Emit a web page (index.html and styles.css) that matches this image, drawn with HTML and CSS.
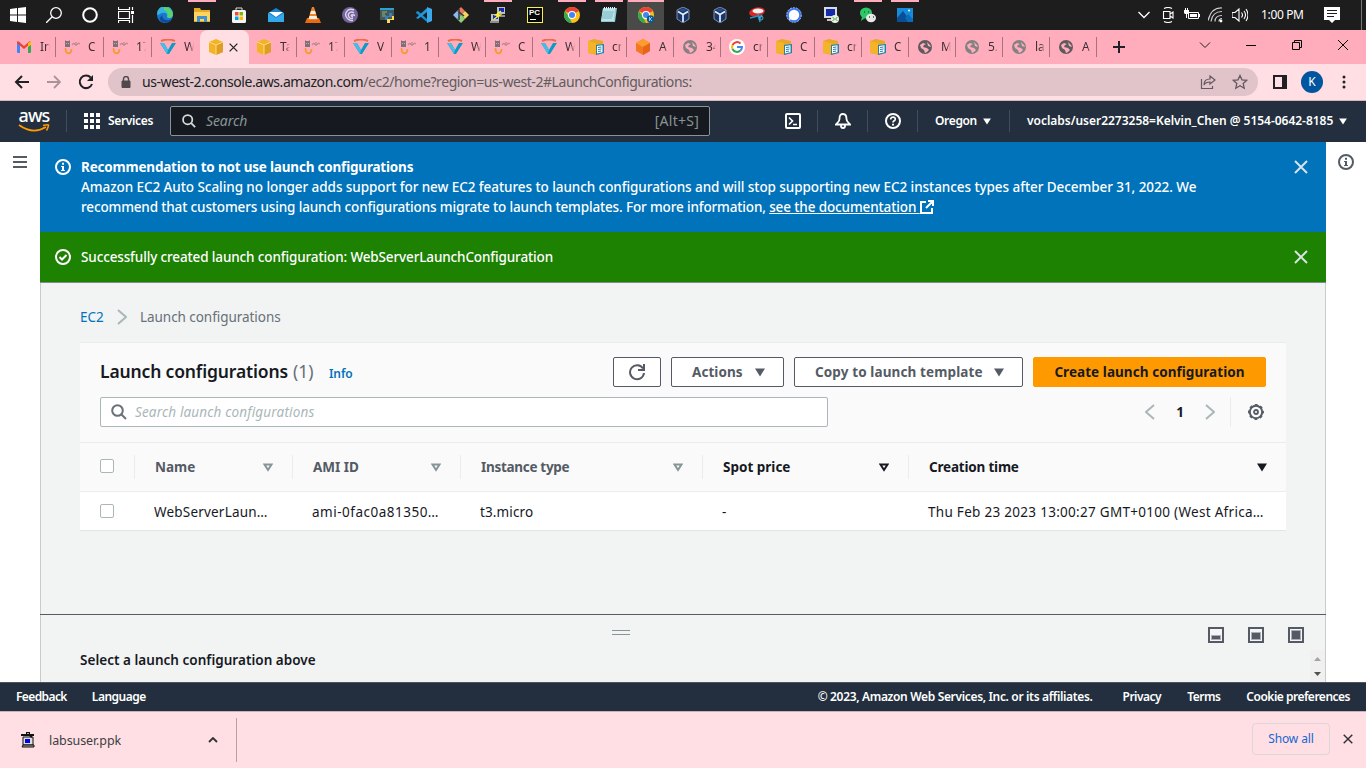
FILE: index.html
```html
<!DOCTYPE html>
<html lang="en">
<head>
<meta charset="utf-8">
<title>Launch configurations | EC2 Management Console</title>
<link rel="stylesheet" href="styles.css">
</head>
<body>
<svg class="sprite" aria-hidden="true">
  <symbol id="lab" viewBox="0 0 16 16"><path d="M1 1l1 1h3l1-1v7H1z" fill="#817079"/><path d="M2 4h1v1H2zm2 0h1v1H4z" fill="#d1a0ab"/><path d="M8 6q2-3 3 0M12 3v4M13 6q1-3 3-1" fill="none" stroke="#c28792" stroke-width="1.300"/><path d="M1.500 9c0 7 6 7 6 1" fill="none" stroke="#f8982f" stroke-width="1.800"/></symbol>
  <symbol id="vee" viewBox="0 0 16 16"><path d="M0 4h4l4 7 4-7h4L9 15H7z" fill="#0a9bc8"/><path d="M4 4l4 7-1 4L0 4z" fill="#47bde4"/><path d="M1 2q7-3 14 0" fill="none" stroke="#f06b43" stroke-width="2"/></symbol>
  <symbol id="cube" viewBox="0 0 16 16"><path d="M1 3l7-3 7 3v10l-7 3-7-3z" fill="#f4b325"/><path d="M8 6l7-3v10l-7 3z" fill="#dc9e25"/><path d="M1 3l7 3 7-3M8 6v10" fill="none" stroke="#ffda82"/></symbol>
  <symbol id="docs" viewBox="0 0 16 16"><path d="M0 2l6-2 9 2v11l-6 3-9-2z" fill="#e6a827"/><path d="M0 2l8 2v11l-8-1z" fill="#f4b32b"/><path d="M8 6l8-1v9l-8 2z" fill="#237fae"/><path d="M9 7l5.500-.7v7L9 14.500z" fill="#fff"/><path d="M10 8.500l3.500-.5M10 10.500l3.500-.5M10 12.500l3-.4" stroke="#237fae"/></symbol>
  <symbol id="orange" viewBox="0 0 16 16"><path d="M1 4l7-4 7 4v8l-7 4-7-4z" fill="#f47820"/><path d="M1 4l7 4 7-4-7-4z" fill="#fb9c2c"/><path d="M8 8l7-4v8l-7 4z" fill="#e6651a"/></symbol>
  <symbol id="globe" viewBox="0 0 16 16"><circle cx="8" cy="8" r="7" fill="currentColor"/><path d="M3 6l3-2 3 1-2 1-1 2 4 1 2 2-2 2-2 1-1-3-3-2M10 3l3 3 1 2-3-1z" fill="#ffadbc"/></symbol>
  <symbol id="google" viewBox="0 0 16 16"><circle cx="8" cy="8" r="8" fill="#fff"/><g fill="none" stroke-width="2"><path d="M11.500 4.500A5 5 0 0 0 3.500 6" stroke="#ea4335"/><path d="M3.500 6a5 5 0 0 0 0 4" stroke="#fbbc05"/><path d="M3.500 10a5 5 0 0 0 8 1.500" stroke="#34a853"/><path d="M11.500 11.500A5 5 0 0 0 13 8H8" stroke="#4285f4"/></g></symbol>
  <symbol id="chrome" viewBox="0 0 16 16"><circle cx="8" cy="8" r="8" fill="#fbc116"/><path d="M8 8L1.100 4a8 8 0 0 1 13.800 0z" fill="#ea4335"/><path d="M1.100 4L5 10l3 6A8 8 0 0 1 1.100 4z" fill="#34a853"/><circle cx="8" cy="8" r="4" fill="#fff"/><circle cx="8" cy="8" r="3" fill="#4285f4"/></symbol>
  <symbol id="vbox" viewBox="0 0 16 16"><path d="M2 3l6-3 6 3v9l-6 4-6-4z" fill="#1a3567" stroke="#8fa9cf" stroke-width=".8"/><path d="M3 4.500l5 3 5-3M8 7.500V15" fill="none" stroke="#e5eef6" stroke-width="1.700"/><path d="M4 3l4-1.500L12 3 8 5z" fill="#264f8d"/></symbol>
  <symbol id="down" viewBox="0 0 10 9"><path d="M0 .5h10L5 8.500z" fill="currentColor"/></symbol>
  <symbol id="sort" viewBox="0 0 10 9"><path d="M1.500 1.500h7L5 7z" fill="none" stroke="currentColor" stroke-width="2"/></symbol>
  <symbol id="search" viewBox="0 0 16 16"><circle cx="6.500" cy="6.500" r="5.300" fill="none" stroke="currentColor" stroke-width="2"/><path d="M10.500 10.500l4.500 4.500" stroke="currentColor" stroke-width="2"/></symbol>
  <symbol id="info" viewBox="0 0 16 16"><circle cx="8" cy="8" r="7" fill="none" stroke="currentColor" stroke-width="2"/><path d="M7 3.800h2v2H7zM6 7h3v4h1v1H6v-1h1V8H6z" fill="currentColor"/></symbol>
  <symbol id="x" viewBox="0 0 14 14"><path d="M1 1l12 12M13 1L1 13" fill="none" stroke="currentColor" stroke-width="2"/></symbol>
  <symbol id="right" viewBox="0 0 10 16"><path d="M1 1l8 7-8 7" fill="none" stroke="currentColor" stroke-width="2"/></symbol>
  <symbol id="left" viewBox="0 0 10 16"><path d="M9 1L1 8l8 7" fill="none" stroke="currentColor" stroke-width="2"/></symbol>
</svg>

<header class="taskbar">
  <div class="slot sys"><svg class="i16" viewBox="0 0 16 16"><path d="M0 2l7-1v6.500H0zM8 .9L16 0v7.500H8zM0 8.500h7V15l-7-1zM8 8.500h8V16l-8-1z" fill="#fff"/></svg></div>
  <div class="slot sys"><svg class="i16" viewBox="0 0 16 16"><circle cx="10" cy="6" r="5.300" fill="none" stroke="#fff" stroke-width="1.300"/><path d="M6.200 9.800L0 16" stroke="#fff" stroke-width="1.300"/></svg></div>
  <div class="slot sys"><svg class="i16" viewBox="0 0 16 16"><circle cx="8" cy="8" r="6.800" fill="none" stroke="#fff" stroke-width="2"/></svg></div>
  <div class="slot sys"><svg class="i16" viewBox="0 0 16 16"><path d="M.5 0v2.500h11V0M.5 16v-2.500h11V16M.5 4.500h11v7H.5zM14.500 0v3m0 5v8" fill="none" stroke="#fff" stroke-width="1.200"/><path d="M13 4h3v3h-3z" fill="#fff"/></svg></div>
  <div class="slot"><svg class="i16" viewBox="0 0 16 16"><circle cx="8" cy="8" r="8" fill="#1678cf"/><path d="M0 7a8 8 0 0 1 16 0c0 5-6 5-6 2.500C11 6 8 5 5 6S1 9 0 7z" fill="#35b3dc"/><path d="M7 .1C12 0 16 4 16 8c-1 3-4 3.500-6 2 2-3 0-6-3-7z" fill="#57d46b"/><path d="M5.500 8c-1 4 4 7 9 4-3 6-11 4-12-1z" fill="#124a99"/></svg></div>
  <div class="slot open"><svg class="i16" viewBox="0 0 16 16"><path d="M0 1h6l1 2h9v12H0z" fill="#e8a924"/><path d="M0 5h16v9H0z" fill="#ffd45e"/><path d="M3 9h10v6h-3v-3H6v3H3z" fill="#3d92d3"/></svg></div>
  <div class="slot"><svg class="i16" viewBox="0 0 16 16"><path d="M5 3V1h6v2" fill="none" stroke="#ddd"/><rect x="1" y="3" width="14" height="13" rx="1.500" fill="#f4f4f4"/><path d="M4 5h3.500v3.500H4z" fill="#f25022"/><path d="M8.500 5H12v3.500H8.500z" fill="#7fba00"/><path d="M4 9.500h3.500V13H4z" fill="#00a4ef"/><path d="M8.500 9.500H12V13H8.500z" fill="#ffb900"/></svg></div>
  <div class="slot"><svg class="i16" viewBox="0 0 16 16"><path d="M0 6l8-5 8 5v9H0z" fill="#1b82d0"/><path d="M1 5h14l-7 5z" fill="#fff"/><path d="M0 6l8 5 8-5v9H0z" fill="#33a9eb"/></svg></div>
  <div class="slot"><svg class="i16" viewBox="0 0 16 16"><path d="M2 11h12l2 5H0z" fill="#e86a12"/><path d="M7 0h2l4 13H3z" fill="#f58122"/><path d="M6 4h4l1 3H5zM4.500 9h7l.8 3H3.700z" fill="#f3eee8"/></svg></div>
  <div class="slot"><svg class="i16" viewBox="0 0 16 16"><circle cx="8" cy="8" r="8" fill="#75629d"/><path d="M12 3C5 0 1 8 6 12q2 2 5 1.500M12 6C8 3 4 8 8 11q1 .7 3 .3M13 8.500c-4-2-5 1-2 1" fill="none" stroke="#ddd7e9" stroke-width="1.400"/></svg></div>
  <div class="slot"><svg class="i16" viewBox="0 0 16 16"><path d="M1 1h14v12H1z" fill="#46575c"/><path d="M1 1h14v2H1z" fill="#29a1d5"/><path d="M3 5h5M3 7h3M3 9h4" stroke="#85b978"/><path d="M10 6h3v4H9v3H6v-4h4z" fill="#3a7dba"/><path d="M15 9v4h-4v3H8v-4h5V9z" fill="#ffd850"/></svg></div>
  <div class="slot"><svg class="i16" viewBox="0 0 16 16"><path d="M0 5l2-1 9 8v3L0 6z" fill="#168ccc"/><path d="M0 11l11-10v4L2 12z" fill="#2396dc"/><path d="M11 0l5 2v12l-5 2z" fill="#39a8ec"/></svg></div>
  <div class="slot"><svg class="i16" viewBox="0 0 16 16"><path d="M8 0l4 4-4 4-4-4z" fill="#ed7760"/><path d="M4 4l4 4-4 4-4-4z" fill="#8db7f2"/><path d="M12 4l4 4-4 4-4-4z" fill="#f4d65e"/><path d="M8 8l4 4-4 4-4-4z" fill="#8bd07d"/><path d="M6 2v11m0-8l5 4" fill="none" stroke="#2e3a35" stroke-width="1.500"/></svg></div>
  <div class="slot open"><svg class="i16" viewBox="0 0 16 16"><path d="M7 0h8v7H7zM1 7h8v7H1z" fill="#bec2ba"/><path d="M9 1h5v4H9zM3 8h5v4H3z" fill="#1627bd"/><path d="M6 8h9v2H6zM0 14h9v2H0z" fill="#8b8f88"/><path d="M11 4L6 8h4l-6 4" fill="none" stroke="#fff52c" stroke-width="1.500"/></svg></div>
  <div class="slot"><span class="pycharm">PC</span></div>
  <div class="slot open"><svg class="i16"><use href="#chrome"/></svg></div>
  <div class="slot open"><svg class="i16" viewBox="0 0 16 16"><path d="M2 1h14l-2 14H0z" fill="#8ec6d2"/><path d="M2 2h12l-1 12H0z" fill="#b8e5e9"/><path d="M2 5h11M2 7h10M1 9h11M1 11h10" stroke="#7eb4bf"/><path d="M3 1h12" stroke="#eee" stroke-width="2" stroke-dasharray="1 1"/></svg></div>
  <div class="slot open current"><svg class="i16" viewBox="0 0 16 16"><use href="#chrome"/><circle cx="12.500" cy="12" r="3.700" fill="#0c5998"/><path d="M11.500 10v4m2.500-4l-2 2 2 2" fill="none" stroke="#b9ddf5" stroke-width=".8"/></svg></div>
  <div class="slot"><svg class="i16"><use href="#vbox"/></svg></div>
  <div class="slot"><svg class="i16"><use href="#vbox"/></svg></div>
  <div class="slot"><svg class="i16" viewBox="0 0 16 16"><ellipse cx="8" cy="5" rx="8" ry="4.500" transform="rotate(-12 8 5)" fill="#d52725"/><ellipse cx="9" cy="4" rx="5.500" ry="2.500" fill="#f7eff0"/><path d="M1 11l8-2M9 7l2 8M13 8l-3 5" stroke="#2c91c4" stroke-width="1.600"/><circle cx="12" cy="11" r="2" fill="none" stroke="#40b3e2"/></svg></div>
  <div class="slot"><svg class="i16" viewBox="0 0 16 16"><circle cx="8" cy="8" r="7.300" fill="#3a76f0" stroke="#9fc1ff" stroke-dasharray="2 1"/><circle cx="8" cy="8" r="5.200" fill="#fff"/><path d="M3 13l1-4 3 3z" fill="#fff"/></svg></div>
  <div class="slot"><svg class="i16" viewBox="0 0 16 16"><path d="M1 0h13v11H1z" fill="#d5dae3"/><path d="M3 2h9v7H3z" fill="#142aaa"/><path d="M4 12h7v2H4z" fill="#c8c8bd"/><circle cx="12" cy="12" r="4" fill="#eceee7"/><path d="M9.500 10l2 2-2 2M14.500 10l-2 2 2 2" fill="none" stroke="#38a936"/></svg></div>
  <div class="slot open"><svg class="i16" viewBox="0 0 16 16"><ellipse cx="6" cy="6" rx="6" ry="5.500" fill="#2bc768"/><path d="M2 10l-1 4 4-3z" fill="#2bc768"/><ellipse cx="11" cy="11" rx="5" ry="4.200" fill="#e8e9e6"/><path d="M4 5h1m3 0h1M9 10h1m3 0h1" stroke="#275d38" stroke-width="1.300"/></svg></div>
  <div class="slot open"><svg class="i16" viewBox="0 0 16 16"><path d="M0 1h16v14H0z" fill="#168cd9"/><path d="M0 15V11l6-7 8 11z" fill="#0a4f96"/><path d="M8 11l3-4 5 5v3h-5z" fill="#0a6bbd"/><path d="M11 3.500h2M12 2.500v2" stroke="#fff"/></svg></div>
  <div class="tray">
    <svg class="t-chev" viewBox="0 0 12 8"><path d="M.5 1L6 6.500 11.500 1" fill="none" stroke="#fff" stroke-width="1.300"/></svg>
    <svg class="i16" viewBox="0 0 16 16"><path d="M4 1.500q4-2 8 0M4 14.500q4 2 8 0M3.500 4.500h6.500v7H3.500zM10 7l3-2v6l-3-2" fill="none" stroke="#fff" stroke-width="1.100"/></svg>
    <svg class="i16" viewBox="0 0 16 16"><path d="M4.500 5.500h10v6h-10z" fill="none" stroke="#fff"/><path d="M6 7h7v3H6zM15 7h1v3h-1zM0 3h5v3l-1 1H1L0 6zM1 1h1v2H1zM3 1h1v2H3zM2 7h1v4H2z" fill="#fff"/></svg>
    <svg class="i16" viewBox="0 0 16 16"><path d="M3 15C4 8 8 5 14 5M7 15c0-4 3-6 7-6M0 14C2 6 7 1 14 1.500M11 15c0-2 1-3 3-3" transform="translate(0 -.5)" fill="none" stroke="#cfcfcf" stroke-width="1.200"/><circle cx="13" cy="14" r="1.400" fill="#fff"/></svg>
    <svg class="i16" viewBox="0 0 16 16"><path d="M0 5.500h3L7 2v12l-4-3.500H0zM9.500 5.500q2 2.500 0 5M12 4q3 4 0 8M14 2q4 6 0 12" fill="none" stroke="#fff" stroke-width="1.100"/></svg>
    <span class="clock">1:00 PM</span>
    <svg class="i16 bell" viewBox="0 0 16 16"><path d="M0 0h16v13h-5l-3 3-3-3H0z" fill="#fff"/><path d="M3 3.500h10M3 6.500h10M3 9.500h7" stroke="#1d1d1d"/></svg>
  </div>
</header>

<nav class="tabs">
  <div class="tab early"><svg class="i16" viewBox="0 0 16 16"><path d="M1 3h3v11H2q-1 0-1-1z" fill="#4285f4"/><path d="M12 3h3v10q0 1-1 1h-2z" fill="#34a853"/><path d="M1 3l1-1 6 5 6-5 1 2-7 6-7-6z" fill="#ea4335"/><path d="M12 4l3-2v4l-3 2z" fill="#fbbc04"/></svg><span>In</span></div>
  <div class="tab early"><svg class="i16"><use href="#lab"/></svg><span>C</span></div>
  <div class="tab early"><svg class="i16"><use href="#lab"/></svg><span>17</span></div>
  <div class="tab early last"><svg class="i16"><use href="#vee"/></svg><span>W</span></div>
  <div class="tab active"><svg class="i16"><use href="#cube"/></svg><svg class="tabx"><use href="#x"/></svg></div>
  <div class="tab wide"><svg class="i16"><use href="#cube"/></svg><span>Ta</span></div>
  <div class="tab wide"><svg class="i16"><use href="#lab"/></svg><span>17</span></div>
  <div class="tab"><svg class="i16"><use href="#vee"/></svg><span>V</span></div>
  <div class="tab"><svg class="i16"><use href="#lab"/></svg><span>1</span></div>
  <div class="tab"><svg class="i16"><use href="#vee"/></svg><span>W</span></div>
  <div class="tab"><svg class="i16"><use href="#lab"/></svg><span>C</span></div>
  <div class="tab"><svg class="i16"><use href="#vee"/></svg><span>W</span></div>
  <div class="tab"><svg class="i16"><use href="#docs"/></svg><span>cr</span></div>
  <div class="tab"><svg class="i16"><use href="#orange"/></svg><span>A</span></div>
  <div class="tab"><svg class="i16 faded"><use href="#globe"/></svg><span>34</span></div>
  <div class="tab"><svg class="i16"><use href="#google"/></svg><span>cr</span></div>
  <div class="tab"><svg class="i16"><use href="#docs"/></svg><span>C</span></div>
  <div class="tab"><svg class="i16"><use href="#docs"/></svg><span>cr</span></div>
  <div class="tab"><svg class="i16"><use href="#docs"/></svg><span>C</span></div>
  <div class="tab"><svg class="i16 world"><use href="#globe"/></svg><span>M</span></div>
  <div class="tab"><svg class="i16 faded"><use href="#globe"/></svg><span>5.</span></div>
  <div class="tab"><svg class="i16 faded"><use href="#globe"/></svg><span>la</span></div>
  <div class="tab"><svg class="i16 world"><use href="#globe"/></svg><span>A</span></div>
  <svg class="newtab" viewBox="0 0 12 12"><path d="M6 0v12M0 6h12" stroke="#202124" stroke-width="2"/></svg>
  <div class="winctl">
    <svg class="wc" viewBox="0 0 12 12"><path d="M1 3.500l5 5 5-5" fill="none" stroke="#222"/></svg>
    <svg class="wc" viewBox="0 0 12 12"><path d="M1 6.500h10" stroke="#000"/></svg>
    <svg class="wc" viewBox="0 0 12 12"><path d="M1.500 3.500h7v7h-7zM3.500 3V1.500h7v7H9" fill="none" stroke="#000"/></svg>
    <svg class="wc" viewBox="0 0 12 12"><path d="M1 1l10 10M11 1L1 11" stroke="#000"/></svg>
  </div>
</nav>

<div class="toolbar">
  <svg class="i16 back" viewBox="0 0 16 16"><path d="M15 8H2m6-6L2 8l6 6" fill="none" stroke="#202124" stroke-width="2"/></svg>
  <svg class="i16 fwd" viewBox="0 0 16 16"><path d="M1 8h13M8 2l6 6-6 6" fill="none" stroke="#ab9499" stroke-width="1.800"/></svg>
  <svg class="i16 reload" viewBox="0 0 16 16"><path d="M14 10A6.300 6.300 0 1 1 12.700 3.500" fill="none" stroke="#202124" stroke-width="2"/><path d="M15 1v6H9z" fill="#202124"/></svg>
  <div class="omnibox">
    <svg class="lock" viewBox="0 0 10 12"><path d="M1 5h8v6.500H1z" fill="#50484b" stroke="#50484b"/><path d="M2.500 5V3a2.500 2.500 0 0 1 5 0v2" fill="none" stroke="#50484b" stroke-width="1.400"/></svg>
    <span class="url"><b>us-west-2.console.aws.amazon.com</b>/ec2/home?region=us-west-2#LaunchConfigurations:</span>
    <svg class="i16 share" viewBox="0 0 16 16"><path d="M1.500 5v9.500h11V12M4 11c0-4 2-6 6-6V2l5 4-5 4V8c-3 0-5 1-6 3z" fill="none" stroke="#65595d" stroke-width="1.200"/></svg>
    <svg class="i16 star" viewBox="0 0 16 16"><path d="M8 1.500l2 4.300 4.700.5-3.500 3.200 1 4.700L8 11.800l-4.200 2.400 1-4.700L1.300 6.300 6 5.800z" fill="none" stroke="#65595d" stroke-width="1.300"/></svg>
  </div>
  <svg class="panelico" viewBox="0 0 14 14"><path d="M1 1h12v12H1z" fill="none" stroke="#202124" stroke-width="2"/><path d="M9 1h4v12H9z" fill="#202124"/></svg>
  <span class="avatar">K</span>
  <svg class="dots" viewBox="0 0 4 16"><circle cx="2" cy="3" r="1.500"/><circle cx="2" cy="8" r="1.500"/><circle cx="2" cy="13" r="1.500"/></svg>
</div>

<div class="awsbar">
  <div class="logo"><span>aws</span><svg viewBox="0 0 32 8"><path d="M1 1q14 10 27 2" fill="none" stroke="#ff9900" stroke-width="1.800"/><path d="M25 1.500q6-1.500 5.500 0Q30 4 28.500 6.500" fill="none" stroke="#ff9900" stroke-width="1.500"/></svg></div>
  <i class="vr"></i>
  <svg class="i16 grid" viewBox="0 0 16 16"><path d="M0 0h4v4H0zm6 0h4v4H6zm6 0h4v4h-4zM0 6h4v4H0zm6 0h4v4H6zm6 0h4v4h-4zM0 12h4v4H0zm6 0h4v4H6zm6 0h4v4h-4z" fill="#fff"/></svg>
  <span class="services">Services</span>
  <div class="globalsearch"><svg class="i16"><use href="#search"/></svg><em>Search</em><span>[Alt+S]</span></div>
  <svg class="i16 shell" viewBox="0 0 16 16"><rect x="1" y="1" width="14" height="14" rx="1" fill="none" stroke="#fff" stroke-width="2"/><path d="M4 4.500L7.500 8 4 11.500M8 11.500h4" fill="none" stroke="#fff" stroke-width="1.700"/></svg>
  <i class="vr"></i>
  <svg class="i16 notif" viewBox="0 0 16 16"><path d="M8 1C5 1 4.500 3 4.500 6c0 3-2.500 4-3.500 5.500h14C14 10 11.500 9 11.500 6c0-3-.5-5-3.500-5zM6 12v1q0 2 2 2t2-2v-1" fill="none" stroke="#fff" stroke-width="1.800"/></svg>
  <i class="vr"></i>
  <svg class="i16 help" viewBox="0 0 16 16"><circle cx="8" cy="8" r="7" fill="none" stroke="#fff" stroke-width="2"/><path d="M5.700 6.500C5.700 3 10.500 3.500 10.300 6.300 10.200 8 8 7.500 8 9.500" fill="none" stroke="#fff" stroke-width="1.700"/><path d="M7 10.700h2v1.800H7z" fill="#fff"/></svg>
  <i class="vr"></i>
  <span class="region">Oregon</span><svg class="caret"><use href="#down"/></svg>
  <i class="vr"></i>
  <span class="account">voclabs/user2273258=Kelvin_Chen @ 5154-0642-8185</span><svg class="caret"><use href="#down"/></svg>
</div>

<div class="page">
  <aside class="rail"><svg viewBox="0 0 14 12"><path d="M0 1h14M0 6h14M0 11h14" stroke="#545b64" stroke-width="2"/></svg></aside>
  <main class="content">
    <section class="flash blue">
      <svg class="i16"><use href="#info"/></svg>
      <div class="flashtext"><strong>Recommendation to not use launch configurations</strong><p class="l1">Amazon EC2 Auto Scaling no longer adds support for new EC2 features to launch configurations and will stop supporting new EC2 instances types after December 31, 2022. We</p><p class="l2">recommend that customers using launch configurations migrate to launch templates. For more information, <a>see the documentation <svg class="ext" viewBox="0 0 14 14"><path d="M6 2H1v11h11V8M8 1h5v5M13 1L6 8" fill="none" stroke="#fff" stroke-width="2"/></svg></a></p></div>
      <svg class="close"><use href="#x"/></svg>
    </section>
    <section class="flash green">
      <svg class="i16" viewBox="0 0 16 16"><circle cx="8" cy="8" r="7" fill="none" stroke="#fff" stroke-width="2"/><path d="M4.500 8l2.500 2.500L11.500 6" fill="none" stroke="#fff" stroke-width="2"/></svg>
      <div class="flashtext success">Successfully created launch configuration: WebServerLaunchConfiguration</div>
      <svg class="close"><use href="#x"/></svg>
    </section>
    <div class="crumbs"><a>EC2</a><svg><use href="#right"/></svg><span>Launch configurations</span></div>
    <section class="card">
      <div class="cardhead">
        <div class="titlebar">
          <h1>Launch configurations</h1><span class="count">(1)</span><a class="infolink">Info</a>
          <div class="buttons">
            <span class="btn refresh"><svg viewBox="0 0 18 18"><path d="M16 10A7 7 0 1 1 15 5.500" fill="none" stroke="#545b64" stroke-width="2"/><path d="M16 1v6h-6" fill="none" stroke="#545b64" stroke-width="2"/></svg></span>
            <span class="btn actions"><span>Actions</span><svg class="bcaret"><use href="#down"/></svg></span>
            <span class="btn copy"><span>Copy to launch template</span><svg class="bcaret"><use href="#down"/></svg></span>
            <span class="btn create"><span>Create launch configuration</span></span>
          </div>
        </div>
        <div class="filterbar">
          <div class="filter"><svg class="i16"><use href="#search"/></svg><em>Search launch configurations</em></div>
          <div class="pager"><svg class="pg"><use href="#left"/></svg><b>1</b><svg class="pg"><use href="#right"/></svg></div>
          <div class="gear"><svg class="i16" viewBox="0 0 16 16"><circle cx="8" cy="8" r="6.200" fill="none" stroke="#545b64" stroke-width="2"/><circle cx="8" cy="8" r="7.300" fill="none" stroke="#545b64" stroke-width="1.300" stroke-dasharray="3 2.733" stroke-dashoffset="1.500"/><circle cx="8" cy="8" r="2" fill="none" stroke="#545b64" stroke-width="1.800"/></svg></div>
        </div>
      </div>
      <div class="row thead">
        <div class="cell check"><i class="box"></i></div>
        <div class="cell"><span>Name</span><svg class="sort"><use href="#sort"/></svg></div>
        <div class="cell"><span>AMI ID</span><svg class="sort"><use href="#sort"/></svg></div>
        <div class="cell"><span class="h-type">Instance type</span><svg class="sort"><use href="#sort"/></svg></div>
        <div class="cell dark"><span>Spot price</span><svg class="sort"><use href="#sort"/></svg></div>
        <div class="cell dark"><span class="h-time">Creation time</span><svg class="sort"><use href="#down"/></svg></div>
      </div>
      <div class="row tbody">
        <div class="cell check"><i class="box"></i></div>
        <div class="cell"><span class="v-name">WebServerLaun…</span></div>
        <div class="cell"><span class="v-ami">ami-0fac0a81350…</span></div>
        <div class="cell"><span class="v-type">t3.micro</span></div>
        <div class="cell"><span>-</span></div>
        <div class="cell"><span class="v-time">Thu Feb 23 2023 13:00:27 GMT+0100 (West Africa…</span></div>
      </div>
    </section>
    <section class="split">
      <div class="splitbar"><i class="handle"></i><div class="sizes">
        <svg class="i16" viewBox="0 0 16 16"><path d="M1 1h14v14H1z" fill="#f5f5f5" stroke="#545b64" stroke-width="2"/><path d="M3.500 8.500h9v4h-9z" fill="#545b64" stroke="#aaadb1"/></svg>
        <svg class="i16" viewBox="0 0 16 16"><path d="M1 1h14v14H1z" fill="#f5f5f5" stroke="#545b64" stroke-width="2"/><path d="M3.500 5.500h9v7h-9z" fill="#545b64" stroke="#aaadb1"/></svg>
        <svg class="i16" viewBox="0 0 16 16"><path d="M1 1h14v14H1z" fill="#f5f5f5" stroke="#545b64" stroke-width="2"/><path d="M3.500 3.500h9v9h-9z" fill="#545b64" stroke="#aaadb1"/></svg></div></div>
      <div class="splitbody"><h2>Select a launch configuration above</h2><div class="scroll"><svg viewBox="0 0 7 4"><path d="M0 4h7L3.500 0z" fill="#a3a3a3"/></svg><svg viewBox="0 0 7 4"><path d="M0 0h7L3.500 4z" fill="#505050"/></svg></div></div>
    </section>
  </main>
  <aside class="rail right"><svg class="i16"><use href="#info"/></svg></aside>
</div>

<footer class="foot"><span class="f1">Feedback</span><span class="f2">Language</span><span class="f3">© 2023, Amazon Web Services, Inc. or its affiliates.</span><span class="f4">Privacy</span><span class="f5">Terms</span><span class="f6">Cookie preferences</span></footer>
<div class="downloads">
  <div class="download"><svg class="i16" viewBox="0 0 16 16"><path d="M3 5h10v8H3z" fill="#ddd" stroke="#111"/><path d="M5 7h5v4H5z" fill="#0000f0"/><path d="M6 0h4v2h4v2h-2v2L9 4H1V2h5z" fill="#111"/><path d="M7 1h2v1H7z" fill="#9b9"/><path d="M3 13h11v2H2z" fill="#a7a58d" stroke="#111"/></svg><span>labsuser.ppk</span><svg class="up" viewBox="0 0 10 6"><path d="M1 5l4-4 4 4" fill="none" stroke="#303134" stroke-width="1.800"/></svg></div>
  <span class="showall">Show all</span><svg class="dlx"><use href="#x"/></svg>
</div>
</body>
</html>
```
FILE: styles.css
```css
* { box-sizing: border-box; }
body { margin: 0; width: 1366px; height: 768px; overflow: hidden; display: flex; flex-direction: column; background: #fff; color: #16191f; font: 13.5px/20px "Noto Sans", "Open Sans", sans-serif; }
svg { display: block; flex: none; }
.sprite { position: absolute; width: 0; height: 0; }
.i16 { width: 16px; height: 16px; }
h1, h2, p { margin: 0; }
span, em, h1, h2, strong { white-space: nowrap; }

/* Windows taskbar */
.taskbar { height: 30px; flex: none; display: flex; background: #1d1d1d; }
.slot { width: 37px; height: 30px; flex: none; display: flex; align-items: center; justify-content: center; }
.slot.sys { width: 36px; }
.slot.sys:nth-child(4) { width: 38px; padding-right: 2px; }
.open { background: linear-gradient(#ffadbc, #ffadbc) center top / 28px 2px no-repeat; }
.current { background: linear-gradient(#ffadbc, #ffadbc) center top / 36px 2px no-repeat, #4a4a49; }
.pycharm { width: 16px; height: 16px; border: 1px solid #f6f150; background: #080808 linear-gradient(#fff, #fff) 2px 11px / 6px 1px no-repeat; color: #fff; font: bold 8px/9px "Liberation Sans", sans-serif; text-align: center; }
.tray { margin-left: auto; width: 228px; height: 30px; display: flex; align-items: center; color: #fff; border-right: 1px solid #777; margin-right: 4px; }
.t-chev { width: 12px; height: 8px; margin: 0 10px 0 4px; }
.tray .i16 { margin-right: 8px; }
.clock { font-size: 12px; letter-spacing: -.35px; margin-left: 5px; width: 41px; }
.tray .bell { margin: 0 0 0 22px; }

/* Browser tabs */
.tabs { height: 34px; flex: none; display: flex; align-items: center; padding-left: 8px; background: #ffadbc; color: #3c3035; }
.tab { width: 47px; height: 20px; flex: none; display: flex; align-items: center; padding-left: 8px; border-right: 1px solid #a5727e; font-size: 12px; }
.tab.wide { width: 48px; padding-left: 7px; }
.tab.early { width: 48px; }
.tab.last { border-color: transparent; }
.tab span { width: 10px; height: 18px; line-height: 18px; margin-left: 8px; -webkit-mask-image: linear-gradient(90deg, #000 55%, transparent); mask-image: linear-gradient(90deg, #000 55%, transparent); }
.tab.active { width: 49px; height: 34px; padding-left: 8px; border: 0; border-radius: 8px 8px 0 0; background: #ffdfe4; }
.tabx { width: 9px; height: 9px; margin-left: 5px; color: #202124; }
.faded { color: #858082; }
.world { color: #5f5a5d; }
.newtab { width: 12px; height: 12px; margin-left: 16px; }
.winctl { margin-left: auto; display: flex; gap: 34px; padding: 0 17px 5px 0; }
.wc { width: 12px; height: 12px; }

/* Address bar */
.toolbar { height: 37px; flex: none; display: flex; align-items: center; background: #ffdfe4; border-bottom: 1px solid #d0babf; }
.back { margin-left: 14px; }
.fwd { margin-left: 16px; }
.reload { margin-left: 16px; }
.omnibox { width: 1150px; height: 28px; margin-left: 14px; border-radius: 14px; background: #e0c4c9; display: flex; align-items: center; }
.lock { width: 10px; height: 12px; margin-left: 13px; }
.url { margin-left: 11px; font-size: 14px; color: #655a5e; letter-spacing: -.43px; }
.url b { font-weight: 400; color: #202124; }
.share { margin-left: auto; margin-right: 16px; }
.star { margin-right: 10px; }
.panelico { width: 14px; height: 14px; margin-left: 15px; }
.avatar { width: 22px; height: 22px; border-radius: 50%; background: #00559f; color: #fff; text-align: center; line-height: 22px; font-size: 12px; margin-left: 14px; }
.dots { width: 4px; height: 16px; margin-left: 19px; fill: #202124; }

/* Console navigation */
.awsbar { height: 41px; flex: none; display: flex; align-items: center; background: #232f3e; color: #fff; font-size: 12px; font-weight: 600; padding-bottom: 1px; }
.logo { width: 32px; margin-left: 18px; height: 22px; text-align: center; font: 500 18px/14px "Noto Sans", sans-serif; }
.logo span { display: block; letter-spacing: -.9px; height: 14px; line-height: 10px; }
.logo svg { width: 32px; height: 8px; }
.vr { width: 1px; height: 22px; background: #414d5c; flex: none; }
.logo + .vr { margin-left: 16px; }
.grid { margin-left: 17px; }
.services { margin-left: 8px; width: 45px; letter-spacing: -.35px; }
.globalsearch { width: 540px; height: 30px; margin-left: 17px; border: 1px solid #879596; border-radius: 2px; background: #16191f; display: flex; align-items: center; font-weight: 400; font-size: 14px; color: #879596; padding: 0 10px 0 11px; }
.globalsearch svg { color: #d5dbdb; width: 14px; height: 14px; }
.globalsearch em { margin-left: 10px; letter-spacing: -.1px; }
.globalsearch span { margin-left: auto; letter-spacing: .25px; }
.shell { margin: 0 16px 0 75px; }
.notif { margin: 0 16px 0 17px; }
.help { margin: 0 16px 0 17px; }
.region { margin-left: 17px; width: 42px; letter-spacing: -.35px; }
.caret { width: 8px; height: 7px; margin: 0 18px 0 6px; }
.account { margin-left: 17px; width: 307px; letter-spacing: -.02px; }
.account + .caret { margin-left: 5px; }

/* Page */
.page { height: 540px; flex: none; display: flex; }
.rail { width: 40px; padding: 14px 13px; }
.rail svg { width: 14px; height: 12px; }
.rail.right { padding: 12px; color: #545b64; }
.rail.right svg { width: 16px; height: 16px; }
.content { width: 1286px; height: 540px; display: flex; flex-direction: column; background: #f2f3f3; border: solid #c7cccc; border-width: 0 1px; }
.flash { flex: none; display: flex; color: #fff; padding: 0 18px 0 15px; margin: 0 -1px; font-weight: 500; }
.flash.blue { height: 90px; background: #0073bb; padding-top: 17px; }
.flash.green { height: 51px; background: #1d8102; border-bottom: 1px solid #808b8b; padding-top: 17px; }
.flashtext { margin: -2px 0 0 10px; flex: 1; }
.flashtext strong { display: block; font-weight: 700; letter-spacing: -.2px; }
.flashtext p { white-space: nowrap; }
.l1 { letter-spacing: -.067px; }
.l2 { letter-spacing: -.145px; }
.l2 a { text-decoration: underline; letter-spacing: -.12px; }
.ext { display: inline-block; width: 14px; height: 14px; vertical-align: -2px; }
.success { letter-spacing: -.13px; }
.close { width: 14px; height: 14px; margin-top: 1px; color: #d9e2e5; }
.crumbs { height: 59px; flex: none; padding: 24px 0 0 39px; display: flex; align-items: flex-start; color: #687078; }
.crumbs a { color: #0073bb; width: 24px; }
.crumbs svg { width: 10px; height: 16px; margin: 2px 13px 0; color: #aab7b8; }
.crumbs span { letter-spacing: -.05px; }

.card { width: 1206px; height: 189px; margin-left: 39px; flex: none; border-top: 1px solid #eaeded; border-bottom: 1px solid #e2e5e5; background: #fff; }
.cardhead { height: 100px; background: #fafafa; padding: 14px 20px 13px; border-bottom: 1px solid #eaeded; }
.titlebar { display: flex; height: 30px; align-items: center; }
h1 { width: 188px; font-size: 17.5px; line-height: 22px; font-weight: 600; letter-spacing: -.15px; padding-bottom: 2px; }
.count { font-size: 17.5px; color: #687078; margin-left: 5px; width: 22px; padding-bottom: 2px; }
.infolink { color: #0073bb; font-size: 12px; font-weight: 600; margin: 4px 0 0 14px; letter-spacing: -.1px; }
.buttons { margin-left: auto; display: flex; gap: 10px; }
.btn { height: 30px; display: flex; align-items: center; justify-content: space-between; padding: 0 18px 0 20px; border: 1px solid #545b64; border-radius: 2px; color: #545b64; background: #fff; font-weight: 700; font-size: 13.5px; letter-spacing: .06px; }
.refresh { width: 48px; padding: 0; justify-content: center; }
.refresh svg { width: 18px; height: 18px; }
.actions { width: 113px; }
.copy { width: 229px; letter-spacing: .12px; }
.create { width: 233px; padding: 0; justify-content: center; background: #ff9900; border-color: #ff9900; color: #16191f; }
.bcaret { width: 10px; height: 9px; }
.filterbar { height: 30px; margin-top: 10px; display: flex; align-items: center; }
.filter { width: 728px; height: 30px; border: 1px solid #aab7b8; border-radius: 2px; background: #fff; display: flex; align-items: center; padding-left: 10px; color: #687078; }
.filter em { margin-left: 8px; color: #aab7b8; letter-spacing: .16px; }
.pager { margin-left: auto; display: flex; align-items: center; gap: 20px; width: 85px; color: #16191f; }
.pager b { width: 10px; text-align: center; }
.pg { width: 10px; height: 16px; color: #aab7b8; }
.gear { height: 30px; width: 36px; display: flex; align-items: center; padding-left: 17px; border-left: 1px solid #eaeded; }
.row { display: grid; grid-template-columns: 54px 158px 168px 242px 206px 378px; align-items: center; }
.thead { height: 49px; background: #fafafa; border-bottom: 1px solid #eaeded; color: #545b64; font-weight: 700; }
.thead .cell { display: flex; align-items: center; justify-content: space-between; height: 24px; padding: 0 19px 0 20px; border-left: 1px solid #eaeded; }
.thead .check { border: 0; }
.row .cell.check { padding: 0 0 2px 20px; }
.thead .dark { color: #16191f; }
.h-type { letter-spacing: -.3px; }
.h-time { letter-spacing: -.2px; }
.box { display: block; width: 14px; height: 14px; border: 1px solid #aab7b8; border-radius: 2px; background: #fff; }
.sort { width: 10px; height: 9px; color: #879596; }
.dark .sort { color: #16191f; }
.tbody { height: 39px; padding-top: 1px; }
.tbody .cell { padding-left: 20px; }
.v-name { letter-spacing: .2px; }
.v-ami { letter-spacing: .5px; }
.v-type { letter-spacing: .12px; }
.v-time { letter-spacing: .29px; }

.split { margin: auto -1px 0; height: 68px; border-top: 1px solid #545b64; padding: 0 1px; }
.splitbar { height: 35px; display: flex; align-items: center; justify-content: flex-end; padding: 4px 21px 0 0; }
.handle { width: 18px; height: 5px; border: solid #879596; border-width: 1px 0; margin: -4px 578px 0 0; }
.sizes { display: flex; gap: 24px; }
.splitbody { display: flex; height: 32px; justify-content: space-between; padding-left: 39px; }
h2 { font-size: 13.5px; line-height: 20px; font-weight: 600; letter-spacing: .03px; }
.scroll { width: 15px; background: #f0f0f0; display: flex; flex-direction: column; align-items: center; gap: 11px; padding-top: 7px; }
.scroll svg { width: 7px; height: 4px; }

.foot { height: 29px; flex: none; background: #232f3e; border-top: 1px solid #4b5561; color: #fff; font-size: 12px; font-weight: 600; display: flex; align-items: center; padding: 0 16px; letter-spacing: -.5px; }
.f1 { letter-spacing: -.6px; }
.f2 { margin-left: 25px; }
.f3 { margin-left: auto; letter-spacing: -.34px; }
.f4 { margin-left: 30px; }
.f5 { margin-left: 26px; }
.f6 { margin-left: 26px; }
.downloads { height: 57px; flex: none; background: #ffdfe4; border-top: 1px solid #c8b3b8; display: flex; align-items: center; color: #3c4043; font-size: 12px; }
.download { width: 237px; height: 44px; border-right: 1px solid #b9a1a6; display: flex; align-items: center; padding: 0 18px 0 20px; }
.download span { margin: 2px 0 0 13px; font-size: 12.5px; letter-spacing: -.1px; }
.up { width: 10px; height: 6px; margin-left: auto; }
.showall { width: 78px; height: 32px; line-height: 29px; text-align: center; border: 1px solid #dcd5d9; border-radius: 4px; color: #1967d2; margin: -2px 0 0 auto; letter-spacing: -.1px; }
.dlx { width: 10px; height: 10px; color: #303134; margin: -2px 13px 0; }
```
